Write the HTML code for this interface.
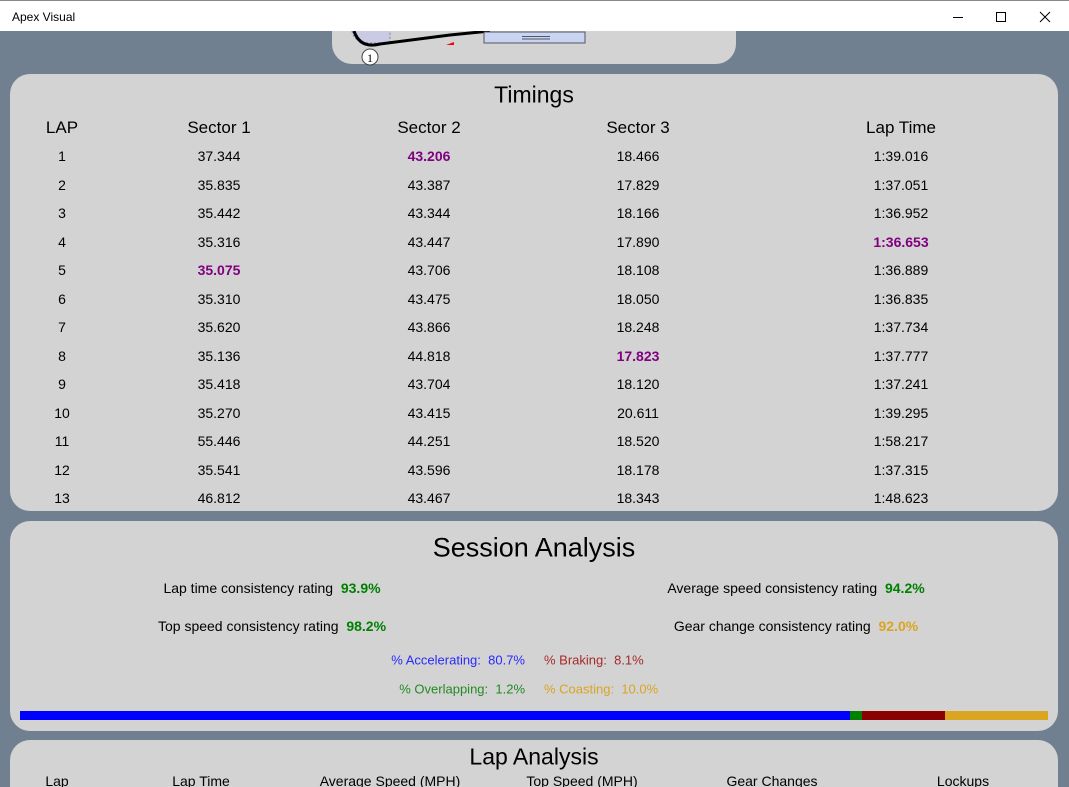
<!DOCTYPE html>
<html><head><meta charset="utf-8"><style>
*{margin:0;padding:0;box-sizing:border-box}
html,body{width:1069px;height:787px;overflow:hidden}
body{background:#708090;font-family:"Liberation Sans",sans-serif;position:relative;color:#000}
.tb{position:absolute;left:0;top:0;width:1069px;height:31px;background:#fff;border-top:1px solid #888;z-index:5}
.tb .t{position:absolute;left:12px;top:9px;font-size:12px}
.p{position:absolute;background:#d3d3d3;border-radius:20px}
.c{position:absolute;transform:translate(-50%,-50%);white-space:nowrap}
.r{position:absolute;transform:translateY(-50%);white-space:nowrap}
.pu{color:#800080;font-weight:bold}
.g{color:#008000;font-weight:bold}
</style></head><body>
<div class="tb"><span class="t">Apex Visual</span>
<svg style="position:absolute;left:950px;top:8px" width="105" height="16"><path d="M3 8.5h10" stroke="#000" stroke-width="1"/><rect x="46.5" y="3.5" width="9" height="9" fill="none" stroke="#000"/><path d="M90 3l10 10M100 3l-10 10" stroke="#000"/></svg></div>
<div class="p" style="left:332px;top:11px;width:404px;height:53px;border-radius:0 0 20px 20px"></div>
<svg style="position:absolute;left:340px;top:31px" width="260" height="36">
<path d="M12 0 Q14 12 30 12 L50 12 L50 0" fill="#c8c8e8" stroke="#66a" stroke-dasharray="2 2" opacity=".8"/>
<path d="M14 0 Q20 18 40 13 L110 4 L150 0" stroke="#000" stroke-width="3" fill="none"/>
<rect x="144" y="1" width="101" height="11" fill="#c8d4f0" stroke="#556"/>
<path d="M182 5.5h28M182 8h28" stroke="#556"/>
<path d="M106 14h8v-3z" fill="red"/>
<circle cx="30" cy="26" r="8" fill="#fff" stroke="#444"/><text x="30" y="31" font-size="12" text-anchor="middle" font-family="Liberation Serif">1</text>
</svg>
<div class="p" style="left:10px;top:74px;width:1048px;height:437px"></div>
<div class="p" style="left:10px;top:521px;width:1048px;height:210px"></div>
<div class="p" style="left:10px;top:740px;width:1048px;height:80px"></div>
<div class="c" style="left:534px;top:95px;font-size:23px">Timings</div>
<div class="c" style="left:62px;top:128px;font-size:17px">LAP</div>
<div class="c" style="left:219px;top:128px;font-size:17px">Sector 1</div>
<div class="c" style="left:429px;top:128px;font-size:17px">Sector 2</div>
<div class="c" style="left:638px;top:128px;font-size:17px">Sector 3</div>
<div class="c" style="left:901px;top:128px;font-size:17px">Lap Time</div>
<div id="rows" style="font-size:14px"></div>
<div class="c" style="left:534px;top:548px;font-size:27px">Session Analysis</div>
<div class="c" style="left:272px;top:588px;font-size:14px">Lap time consistency rating&nbsp;&nbsp;<span class="g">93.9%</span></div>
<div class="c" style="left:272px;top:626px;font-size:14px">Top speed consistency rating&nbsp;&nbsp;<span class="g">98.2%</span></div>
<div class="c" style="left:796px;top:588px;font-size:14px">Average speed consistency rating&nbsp;&nbsp;<span class="g">94.2%</span></div>
<div class="c" style="left:796px;top:626px;font-size:14px">Gear change consistency rating&nbsp;&nbsp;<span class="g" style="color:#daa520">92.0%</span></div>
<div class="r" style="right:544px;top:660px;font-size:13px;color:#2a2aff">% Accelerating:&nbsp;&nbsp;80.7%</div>
<div class="r" style="left:544px;top:660px;font-size:13px;color:#a52a2a">% Braking:&nbsp;&nbsp;8.1%</div>
<div class="r" style="right:544px;top:689px;font-size:13px;color:#228b22">% Overlapping:&nbsp;&nbsp;1.2%</div>
<div class="r" style="left:544px;top:689px;font-size:13px;color:#daa520">% Coasting:&nbsp;&nbsp;10.0%</div>
<div style="position:absolute;left:20px;top:711px;height:9px;width:830px;background:#0000ff"></div>
<div style="position:absolute;left:850px;top:711px;height:9px;width:12px;background:#008000"></div>
<div style="position:absolute;left:862px;top:711px;height:9px;width:83px;background:#8b0000"></div>
<div style="position:absolute;left:945px;top:711px;height:9px;width:103px;background:#daa520"></div>
<div class="c" style="left:534px;top:757px;font-size:23px">Lap Analysis</div>
<div class="c" style="left:57px;top:781px;font-size:14px">Lap</div>
<div class="c" style="left:201px;top:781px;font-size:14px">Lap Time</div>
<div class="c" style="left:390px;top:781px;font-size:14px">Average Speed (MPH)</div>
<div class="c" style="left:582px;top:781px;font-size:14px">Top Speed (MPH)</div>
<div class="c" style="left:772px;top:781px;font-size:14px">Gear Changes</div>
<div class="c" style="left:963px;top:781px;font-size:14px">Lockups</div>
<script>
var d=[["37.344","*43.206","18.466","1:39.016"],["35.835","43.387","17.829","1:37.051"],["35.442","43.344","18.166","1:36.952"],["35.316","43.447","17.890","*1:36.653"],["*35.075","43.706","18.108","1:36.889"],["35.310","43.475","18.050","1:36.835"],["35.620","43.866","18.248","1:37.734"],["35.136","44.818","*17.823","1:37.777"],["35.418","43.704","18.120","1:37.241"],["35.270","43.415","20.611","1:39.295"],["55.446","44.251","18.520","1:58.217"],["35.541","43.596","18.178","1:37.315"],["46.812","43.467","18.343","1:48.623"]];
var xs=[62,219,429,638,901],h="";
d.forEach(function(r,i){var y=156+28.5*i;var a=[String(i+1)].concat(r);a.forEach(function(v,j){var p=v[0]=="*";h+='<div class="c'+(p?' pu':'')+'" style="left:'+xs[j]+'px;top:'+y+'px">'+(p?v.slice(1):v)+'</div>';});});
document.getElementById("rows").innerHTML=h;
</script>
</body></html>
